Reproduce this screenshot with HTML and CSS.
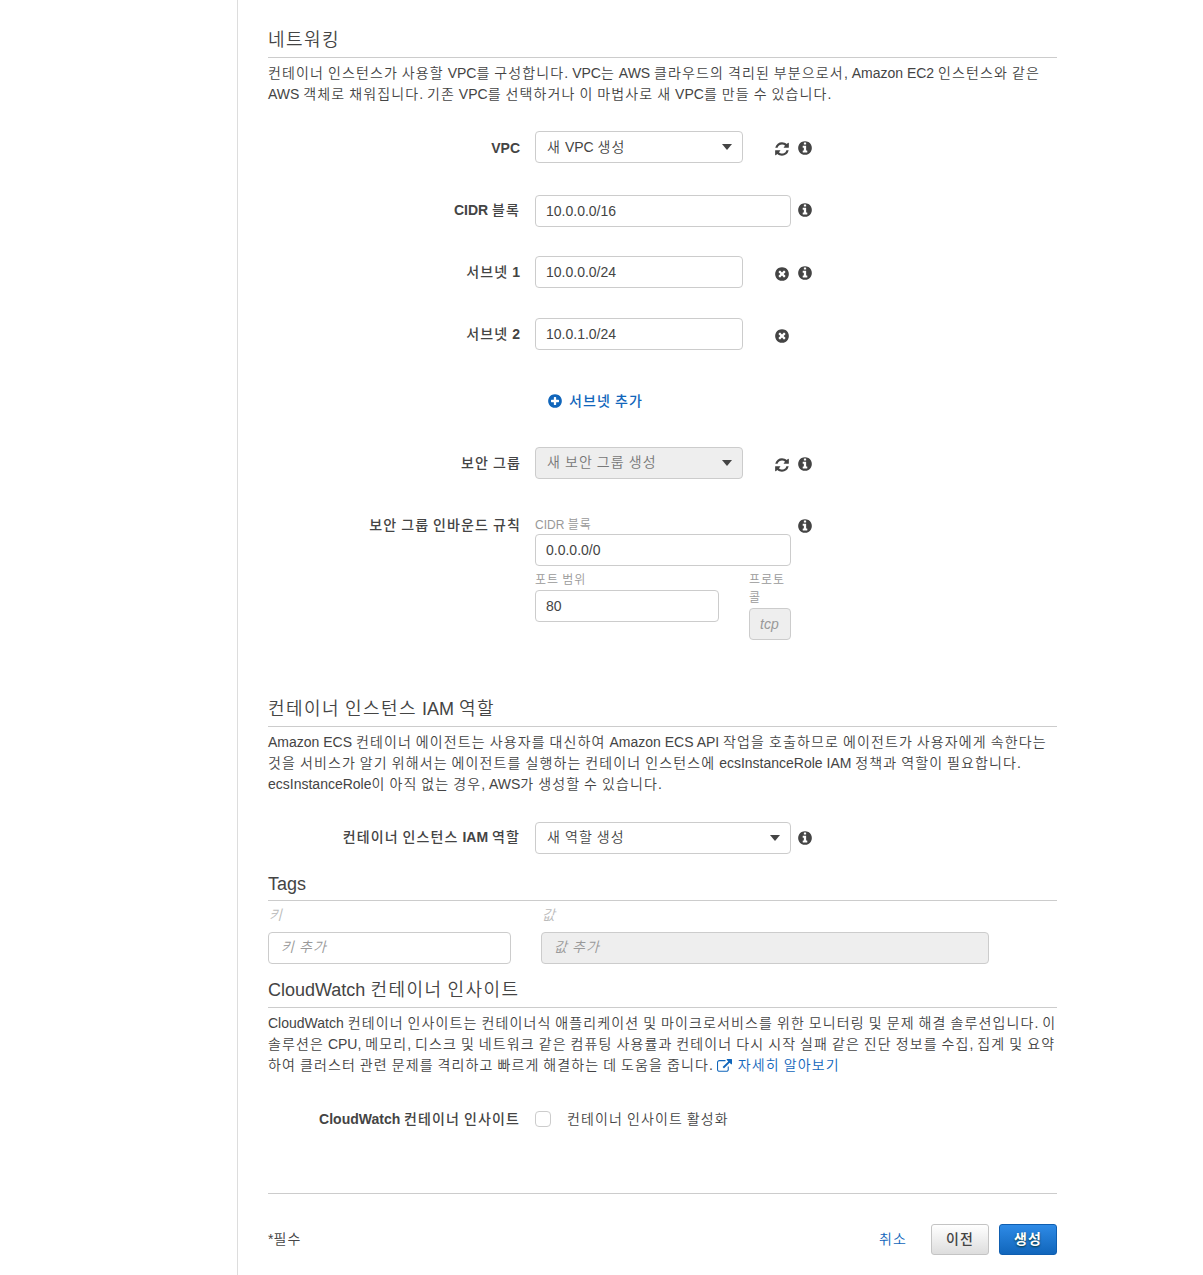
FILE: index.html
```html
<!DOCTYPE html>
<html lang="ko">
<head>
<meta charset="utf-8">
<title>클러스터 생성</title>
<link rel="stylesheet" href="styles.css">
</head>
<body>
<svg class="sprite" width="0" height="0" aria-hidden="true">
  <symbol id="info" viewBox="0 0 1792 1792"><path d="M1152 1376v-160q0-14-9-23t-23-9h-96v-512q0-14-9-23t-23-9h-320q-14 0-23 9t-9 23v160q0 14 9 23t23 9h96v320h-96q-14 0-23 9t-9 23v160q0 14 9 23t23 9h448q14 0 23-9t9-23zm-128-896v-160q0-14-9-23t-23-9h-192q-14 0-23 9t-9 23v160q0 14 9 23t23 9h192q14 0 23-9t9-23zm640 416q0 209-103 385.5t-279.5 279.5-385.5 103-385.5-103-279.5-279.5-103-385.5 103-385.5 279.5-279.5 385.5-103 385.5 103 279.5 279.5 103 385.5z"/></symbol>
  <symbol id="refresh" viewBox="0 0 1792 1792"><path d="M1639 1056q0 5-1 7-64 268-268 434.5t-478 166.5q-146 0-282.5-55t-243.5-157l-129 129q-19 19-45 19t-45-19-19-45v-448q0-26 19-45t45-19h448q26 0 45 19t19 45-19 45l-137 137q71 66 161 102t187 36q134 0 250-65t186-179q11-17 53-117 8-23 30-23h192q13 0 22.5 9.5t9.5 22.5zm25-800v448q0 26-19 45t-45 19h-448q-26 0-45-19t-19-45 19-45l138-138q-148-137-349-137-134 0-250 65t-186 179q-11 17-53 117-8 23-30 23h-199q-13 0-22.5-9.5t-9.5-22.5v-7q65-268 270-434.5t480-166.5q146 0 284 55.5t245 156.5l130-129q19-19 45-19t45 19 19 45z"/></symbol>
  <symbol id="remove" viewBox="0 0 1792 1792"><path d="M1277 1122q0-26-19-45l-181-181 181-181q19-19 19-45 0-27-19-46l-90-90q-19-19-46-19-26 0-45 19l-181 181-181-181q-19-19-45-19-27 0-46 19l-90 90q-19 19-19 46 0 26 19 45l181 181-181 181q-19 19-19 45 0 27 19 46l90 90q19 19 46 19 26 0 45-19l181-181 181 181q19 19 45 19 27 0 46-19l90-90q19-19 19-46zm387-226q0 209-103 385.5t-279.5 279.5-385.5 103-385.5-103-279.5-279.5-103-385.5 103-385.5 279.5-279.5 385.5-103 385.5 103 279.5 279.5 103 385.5z"/></symbol>
  <symbol id="add" viewBox="0 0 1792 1792"><path d="M1344 960v-128q0-26-19-45t-45-19h-256v-256q0-26-19-45t-45-19h-128q-26 0-45 19t-19 45v256h-256q-26 0-45 19t-19 45v128q0 26 19 45t45 19h256v256q0 26 19 45t45 19h128q26 0 45-19t19-45v-256h256q26 0 45-19t19-45zm320-64q0 209-103 385.5t-279.5 279.5-385.5 103-385.5-103-279.5-279.5-103-385.5 103-385.5 279.5-279.5 385.5-103 385.5 103 279.5 279.5 103 385.5z"/></symbol>
  <symbol id="external" viewBox="0 0 1792 1792"><path d="M1408 928v320q0 119-84.500 203.500t-203.500 84.500h-832q-119 0-203.500-84.500t-84.500-203.500v-832q0-119 84.500-203.500t203.500-84.500h704q14 0 23 9t9 23v64q0 14-9 23t-23 9h-704q-66 0-113 47t-47 113v832q0 66 47 113t113 47h832q66 0 113-47t47-113v-320q0-14 9-23t23-9h64q14 0 23 9t9 23zm384-864v512q0 26-19 45t-45 19-45-19l-176-176-652 652q-10 10-23 10t-23-10l-114-114q-10-10-10-23t10-23l652-652-176-176q-19-19-19-45t19-45 45-19h512q26 0 45 19t19 45z"/></symbol>
</svg>
<main class="page">
  <section class="networking">
    <h2>네트워킹</h2>
    <p class="intro"><span class="line">컨테이너 인스턴스가 사용할 <span class="en">VPC</span>를 구성합니다<span class="en">. VPC</span>는 <span class="en">AWS</span> 클라우드의 격리된 부분으로서<span class="en">, Amazon EC2</span> 인스턴스와 같은</span>
    <span class="line"><span class="en">AWS</span> 객체로 채워집니다<span class="en">.</span> 기존 <span class="en">VPC</span>를 선택하거나 이 마법사로 새 <span class="en">VPC</span>를 만들 수 있습니다<span class="en">.</span></span></p>

    <div class="row vpc">
      <label><span class="en">VPC</span></label>
      <div class="control"><div class="select narrow"><span>새 <span class="en">VPC</span> 생성</span><i class="caret"></i></div><svg class="icon action"><use href="#refresh"/></svg></div>
      <svg class="icon"><use href="#info"/></svg>
    </div>
    <div class="row cidr">
      <label><span class="en">CIDR</span> 블록</label>
      <div class="control"><input class="field" value="10.0.0.0/16"></div>
      <svg class="icon raised"><use href="#info"/></svg>
    </div>
    <div class="row subnet1">
      <label>서브넷 <span class="en">1</span></label>
      <div class="control"><input class="field narrow" value="10.0.0.0/24"><svg class="icon action"><use href="#remove"/></svg></div>
      <svg class="icon"><use href="#info"/></svg>
    </div>
    <div class="row subnet2">
      <label>서브넷 <span class="en">2</span></label>
      <div class="control"><input class="field narrow" value="10.0.1.0/24"><svg class="icon action"><use href="#remove"/></svg></div>
    </div>
    <a class="add-subnet"><svg class="icon"><use href="#add"/></svg><span>서브넷 추가</span></a>
    <div class="row group">
      <label>보안 그룹</label>
      <div class="control"><div class="select narrow disabled"><span>새 보안 그룹 생성</span><i class="caret"></i></div><svg class="icon action"><use href="#refresh"/></svg></div>
      <svg class="icon"><use href="#info"/></svg>
    </div>
    <div class="row rules">
      <label>보안 그룹 인바운드 규칙</label>
      <div class="rule">
        <div class="caption"><span class="en">CIDR</span> 블록</div>
        <input class="field" value="0.0.0.0/0">
        <div class="ports">
          <div class="port"><div class="caption">포트 범위</div><input class="field" value="80"></div>
          <div class="protocol"><div class="caption">프로토<br>콜</div><div class="field disabled tcp">tcp</div></div>
        </div>
      </div>
      <svg class="icon"><use href="#info"/></svg>
    </div>
  </section>

  <section class="iam">
    <h2>컨테이너 인스턴스 <span class="en">IAM</span> 역할</h2>
    <p class="intro"><span class="line"><span class="en">Amazon ECS</span> 컨테이너 에이전트는 사용자를 대신하여 <span class="en">Amazon ECS API</span> 작업을 호출하므로 에이전트가 사용자에게 속한다는</span>
    <span class="line">것을 서비스가 알기 위해서는 에이전트를 실행하는 컨테이너 인스턴스에 <span class="en">ecsInstanceRole IAM</span> 정책과 역할이 필요합니다<span class="en">.</span></span>
    <span class="line"><span class="en">ecsInstanceRole</span>이 아직 없는 경우<span class="en">, AWS</span>가 생성할 수 있습니다<span class="en">.</span></span></p>
    <div class="row role">
      <label>컨테이너 인스턴스 <span class="en">IAM</span> 역할</label>
      <div class="control"><div class="select"><span>새 역할 생성</span><i class="caret"></i></div></div>
      <svg class="icon"><use href="#info"/></svg>
    </div>
  </section>

  <section class="tags">
    <h2><span class="en">Tags</span></h2>
    <div class="tag-grid">
      <div class="tag-name">키</div><div class="tag-name">값</div>
      <div class="field hint">키 추가</div><div class="field hint disabled">값 추가</div>
    </div>
  </section>

  <section class="insights">
    <h2><span class="en">CloudWatch</span> 컨테이너 인사이트</h2>
    <p class="intro"><span class="line"><span class="en">CloudWatch</span> 컨테이너 인사이트는 컨테이너식 애플리케이션 및 마이크로서비스를 위한 모니터링 및 문제 해결 솔루션입니다<span class="en">.</span> 이</span>
    <span class="line">솔루션은 <span class="en">CPU,</span> 메모리<span class="en">,</span> 디스크 및 네트워크 같은 컴퓨팅 사용률과 컨테이너 다시 시작 실패 같은 진단 정보를 수집<span class="en">,</span> 집계 및 요약</span>
    <span class="line">하여 클러스터 관련 문제를 격리하고 빠르게 해결하는 데 도움을 줍니다<span class="en">.</span> <a><svg class="icon ext"><use href="#external"/></svg>자세히 알아보기</a></span></p>
    <div class="row enable">
      <label><span class="en">CloudWatch</span> 컨테이너 인사이트</label>
      <div class="control"><span class="checkbox"></span><span>컨테이너 인사이트 활성화</span></div>
    </div>
  </section>

  <footer>
    <span class="required"><span class="en">*</span>필수</span>
    <a class="cancel">취소</a>
    <button class="btn">이전</button>
    <button class="btn primary">생성</button>
  </footer>
</main>
</body>
</html>
```
FILE: styles.css
```css
* { box-sizing: border-box; }

/* Hangul is set slightly loose; word-spacing keeps the spaces at their natural width */
body {
  margin: 0;
  background: #fff;
  color: #444;
  font: 14px/21px "Liberation Sans", "Noto Sans CJK KR DemiLight", "Noto Sans CJK KR", sans-serif;
}

.page, h2, .caption, .btn { letter-spacing: .08em; word-spacing: -.08em; }
.en, input.field, .tcp { letter-spacing: 0; word-spacing: 0; }

.sprite { position: absolute; }

.page {
  width: 820px;
  height: 1275px;
  margin-left: 237px;
  padding: 21px 0 0 30px;
  border-left: 1px solid #ddd;
  overflow: hidden;
}

h2 {
  height: 37px;
  margin: 0;
  border-bottom: 1px solid #ccc;
  font-size: 18px;
  font-weight: 400;
  line-height: 38px;
  white-space: nowrap;
}

.intro { margin: 5px 0 0; }
.line { display: block; height: 21px; white-space: nowrap; }

a { color: #1166bb; text-decoration: none; }

.icon { display: block; width: 16px; height: 16px; fill: currentColor; flex: none; }

/* label | control | info icon */
.row {
  display: grid;
  grid-template-columns: 252px 256px 16px;
  align-items: center;
  height: 32px;
}
.row > label {
  margin-right: -1px;
  text-align: right;
  font-family: "Liberation Sans", "Noto Sans CJK KR", sans-serif;
  font-weight: 500;
  white-space: nowrap;
}
label .en { font-weight: 700; }
.row > label:has(.en:last-child) { margin-right: 0; }
.row > .control, .row > .rule { margin-left: 15px; width: 256px; }
.row > .icon { margin: 2px 0 0 21px; }
.row > .icon.raised { margin-top: -2px; }
.control { display: flex; align-items: center; }
.control .action { margin: 4px 0 0 31px; }

.field, .select {
  display: block;
  width: 256px;
  height: 32px;
  padding: 0 10px;
  border: 1px solid #ccc;
  border-radius: 4px;
  background: #fff;
  color: #444;
  font: inherit;
  line-height: 30px;
  outline: 0;
}
.narrow { width: 208px; }
.select { display: flex; align-items: center; justify-content: space-between; padding-left: 11px; }
.caret { border: 5.500px solid transparent; border-top: 6px solid #444; border-bottom: 0; }
.disabled { background: #eee; color: #777; }

.vpc { margin-top: 26px; }
.vpc > label { padding-top: 2px; }
.cidr { margin-top: 32px; }
.cidr > label { padding-bottom: 2px; }
.subnet1 { margin-top: 29px; }
.subnet2 { margin-top: 30px; }
.add-subnet {
  display: flex;
  align-items: center;
  gap: 6px;
  height: 22px;
  margin: 40px 0 0 279px;
  font-family: "Liberation Sans", "Noto Sans CJK KR", sans-serif;
  font-weight: 500;
}
.group { margin-top: 35px; }
.group .select span, .role .select span { padding-bottom: 2px; }
.rules { align-items: start; height: 126px; margin-top: 36px; }
.rules > .icon { margin-top: 3px; }
.caption { height: 19px; color: #999; font-size: 12px; line-height: 18px; padding-top: 1px; white-space: nowrap; }
.ports { display: flex; justify-content: space-between; padding-top: 4px; }
.port { width: 184px; }
.port .caption { height: 20px; }
.protocol { width: 42px; }
.protocol .caption { height: 38px; }
.port .field, .protocol .field { width: 100%; }
.field.tcp { color: #999; font-style: italic; }

.iam { margin-top: 49px; }
.role { margin-top: 27px; }
.role > label { padding-bottom: 1px; }
.row.role > .icon { margin-top: 0; }
.tags { margin-top: 10px; }
.tags h2 { line-height: 40px; }
.tag-grid {
  display: grid;
  grid-template-columns: 243px 448px;
  grid-template-rows: 31px 32px;
  column-gap: 30px;
}
.tag-name { padding-left: 1px; color: #bbb; font-style: italic; line-height: 29px; }
.field.hint { width: 100%; padding-left: 12px; color: #999; font-style: italic; line-height: 28px; }
.insights { margin-top: 7px; }
.ext { display: inline-block; width: 15px; height: 15px; margin-right: 6px; vertical-align: -4px; }
.enable { margin-top: 27px; }
.checkbox { width: 16px; height: 16px; margin-right: 16px; border: 1px solid #ccc; border-radius: 4px; }

footer {
  display: flex;
  align-items: center;
  margin-top: 58px;
  padding-top: 30px;
  border-top: 1px solid #ccc;
}
.cancel { margin-left: auto; margin-right: 24px; }
.required, .cancel { padding-bottom: 1px; }
.btn {
  width: 58px;
  height: 31px;
  padding: 0;
  border: 1px solid #c4c4c4;
  border-radius: 3px;
  background: linear-gradient(#fff, #ddd);
  color: #444;
  font: 500 14px/27px "Liberation Sans", "Noto Sans CJK KR", sans-serif;
}
.btn.primary {
  margin-left: 10px;
  border-color: #0f5eb0;
  background: linear-gradient(#2e8ae6, #1166bb);
  color: #fff;
  font-weight: 700;
  text-shadow: 0 1px 2px #033;
}
```
